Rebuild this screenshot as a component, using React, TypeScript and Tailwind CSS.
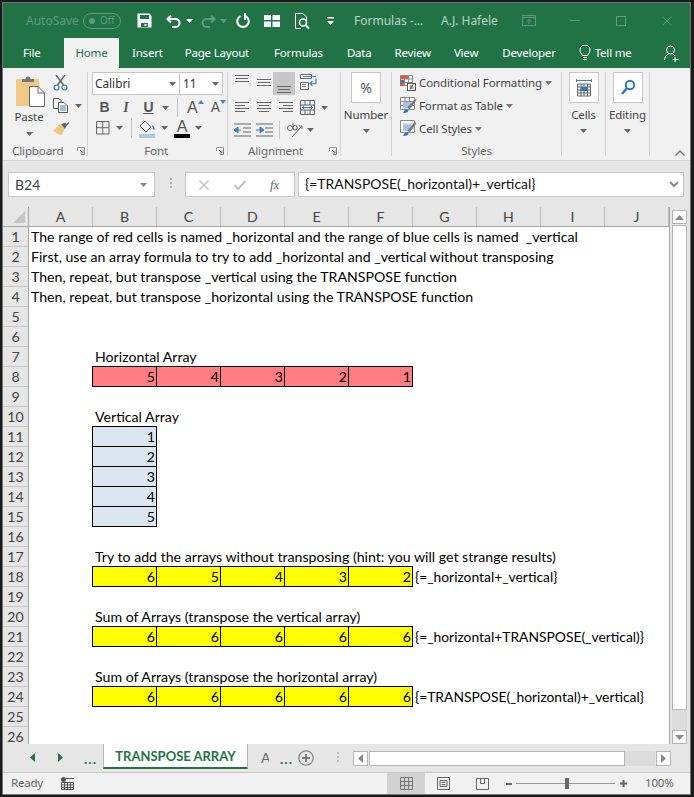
import React from "react";

const Caret = ({ c = "#666", cls = "" }: { c?: string; cls?: string }) => (
  <svg width="7" height="4" viewBox="0 0 7 4" className={"shrink-0 " + cls}><path d="M0 0h7L3.5 4z" fill={c} /></svg>
);

const Launcher = () => (
  <svg width="8" height="8" viewBox="0 0 8 8" className="shrink-0">
    <path d="M.5 4V.5H7.5" fill="none" stroke="#999" />
    <path d="M7.5.5V7.5H4M3 3l3 3M6 3.5V6H3.5" fill="none" stroke="#888" />
  </svg>
);

const Lines = ({ w, cls = "" }: { w: { x: number; l: number; y: number }[]; cls?: string }) => (
  <svg width="16" height="14" viewBox="0 0 16 14" className={"shrink-0 " + cls}>
    {w.map((r, i) => (
      <rect key={i} x={r.x} y={r.y} width={r.l} height="1" fill="#666" />
    ))}
  </svg>
);

const TitleIcons = () => (
  <>
    <svg width="15" height="15" viewBox="0 0 15 15" className="ml-[16px] shrink-0">
      <path fillRule="evenodd" fill="#fff" d="M.5.5H12.5L14.5 2.5V14.5H.5zM3 2v4h9V2zM4 10v4h7v-4zM7.5 11h2v2h-2z" />
    </svg>
    <svg width="15" height="14" viewBox="0 0 15 14" className="ml-[14px] shrink-0">
      <path d="M5 1.5L1.5 5 5 8.5M2 5h7.5a4 4 0 010 8H6" fill="none" stroke="#fff" strokeWidth="2" />
    </svg>
    <Caret c="#fff" cls="ml-[5px]" />
    <svg width="15" height="14" viewBox="0 0 15 14" className="ml-[8px] shrink-0">
      <path d="M10 1.5L13.5 5 10 8.5M13 5H5.5a4 4 0 000 8H9" fill="none" stroke="#5f9c7e" strokeWidth="2" />
    </svg>
    <Caret c="#5f9c7e" cls="ml-[4px]" />
    <svg width="14" height="15" viewBox="0 0 14 15" className="ml-[9px] shrink-0">
      <path d="M4.500 3.200A5.700 5.700 0 1 0 9.500 3.200" fill="none" stroke="#fff" strokeWidth="2" />
      <path d="M9.500.5v6h-1V.5z" fill="#fff" stroke="#fff" />
    </svg>
    <svg width="16" height="12" viewBox="0 0 16 12" className="ml-[14px] shrink-0">
      <path fill="#fff" d="M0 0h7v5H0zM8.500 0H16v5H8.500zM0 6.500h7V12H0zM8.500 6.500H16V12H8.500z" />
    </svg>
    <svg width="15" height="16" viewBox="0 0 15 16" className="ml-[15px] shrink-0">
      <path d="M.5.500H8L11.500 4V8M.5.500V15.500H6" fill="none" stroke="#fff" />
      <circle cx="8" cy="9.500" r="3.500" fill="none" stroke="#fff" strokeWidth="1.500" />
      <path d="M10.500 12l3.500 3.500" stroke="#fff" strokeWidth="2" />
    </svg>
    <svg width="7" height="8" viewBox="0 0 7 8" className="ml-[17px] shrink-0">
      <path d="M0 0h7v1.500H0zM0 4h7L3.500 8z" fill="#fff" />
    </svg>
  </>
);

const TitleBar = () => (
  <div className="flex h-[35px] shrink-0 items-center bg-[#217346] text-[12px] [font-family:'Noto_Sans',sans-serif]">
    <span className="ml-[23px] w-[51px] shrink-0 text-[#5f9c7e]">AutoSave</span>
    <div className="ml-[6px] flex h-[16px] w-[38px] shrink-0 items-center rounded-full border border-[#5f9c7e] pl-[5px] text-[10px] text-[#5f9c7e]">
      <i className="h-[6px] w-[6px] rounded-full bg-[#5f9c7e]" />
      <span className="ml-[5px]">Off</span>
    </div>
    <TitleIcons />
    <span className="ml-[20px] w-[70px] shrink-0 whitespace-nowrap text-[#bcd5c8]">Formulas -...</span>
    <span className="ml-[17px] w-[58px] shrink-0 whitespace-nowrap text-[#bcd5c8]">A.J. Hafele</span>
    <svg width="14" height="11" viewBox="0 0 14 11" className="ml-[23px] shrink-0">
      <path d="M.5.500h13v10H.5zM.5 2.500h13M7 9V4.500M5 6.500l2-2 2 2" fill="none" stroke="#5f9c7e" />
    </svg>
    <div className="ml-[34px] h-px w-[10px] shrink-0 bg-[#5f9c7e]" />
    <div className="ml-[36px] h-[10px] w-[10px] shrink-0 border border-[#5f9c7e]" />
    <svg width="10" height="10" viewBox="0 0 10 10" className="ml-[36px] shrink-0"><path d="M.5.500l9 9M9.500.500l-9 9" stroke="#5f9c7e" /></svg>
  </div>
);

const tabs: [string, number][] = [
  ["Insert", 13],
  ["Page Layout", 22],
  ["Formulas", 25],
  ["Data", 24],
  ["Review", 23],
  ["View", 23],
  ["Developer", 24],
];

const TabsRow = () => (
  <div className="flex h-[30px] shrink-0 items-center bg-[#217346] text-[11.500px] tracking-[-0.2px] text-white [font-family:'Noto_Sans',sans-serif]">
    <span className="ml-[20px] w-[18px] shrink-0">File</span>
    <div className="ml-[23px] flex h-[30px] w-[55px] shrink-0 items-center justify-center bg-[#f1f1f1] text-[#217346]">Home</div>
    {tabs.map(([t, m]) => (
      <span key={t} className="shrink-0 whitespace-nowrap" style={{ marginLeft: m }}>{t}</span>
    ))}
    <svg width="12" height="16" viewBox="0 0 12 16" className="ml-[23px] shrink-0">
      <path d="M3.500 10.500C2.500 8.500 1 7.500 1 5a5 5 0 0110 0c0 2.500-1.500 3.500-2.500 5.500zM4 12.500h4M4.500 14.500h3" fill="none" stroke="#fff" />
    </svg>
    <span className="ml-[4px] shrink-0 whitespace-nowrap">Tell me</span>
    <svg width="15" height="17" viewBox="0 0 15 17" className="ml-[32px] shrink-0">
      <circle cx="6.500" cy="5" r="4" fill="none" stroke="#fff" />
      <path d="M.5 15c0-3 2-5 4-6M8.500 9c1 .3 2 1 2.500 2M11 12v5M8.500 14.500h6" fill="none" stroke="#fff" />
    </svg>
  </div>
);

const Group = ({ w, children, label, labelCls = "justify-center" }: any) => (
  <div className="mt-1 flex h-[84px] shrink-0 flex-col border-r border-[#d0d0d0]" style={{ width: w }}>
    <div className="h-[74px]">{children}</div>
    <div className={"flex h-[10px] items-center text-[11.500px] leading-none tracking-[-0.1px] text-[#666] " + labelCls}>
      {label}
    </div>
  </div>
);

const BigBox = ({ children }: { children: React.ReactNode }) => (
  <div className="flex h-[31px] w-[30px] items-center justify-center border border-[#c6c6c6] bg-white">{children}</div>
);

const Clipboard = () => (
  <Group w={85} labelCls="justify-start" label={<><span className="ml-[9px] w-[52px]">Clipboard</span><span className="ml-[13px]"><Launcher /></span></>}>
    <div className="flex">
      <div className="ml-[9px] flex w-[34px] flex-col items-center">
        <svg width="29" height="31" viewBox="0 0 29 31" className="mt-[4px] ml-[2px]">
          <rect x="0" y="3" width="23" height="27" rx="1" fill="#f0c987" />
          <path d="M6 3h3.500a2.500 2.500 0 015 0H18v3H6z" fill="#777" />
          <path d="M13.500 10.500h8.500l6.500 6.500V30.500h-15z" fill="#fff" stroke="#666" />
          <path d="M22 10.500V17h6.500" fill="none" stroke="#666" />
        </svg>
        <span className="mt-[2px] text-[11.500px] leading-[16px] tracking-[-0.1px] text-[#444]">Paste</span>
        <Caret cls="mt-[7px]" />
      </div>
      <div className="ml-[7px] flex flex-col">
        <svg width="15" height="16" viewBox="0 0 15 16" className="mt-[3px]">
          <path d="M3 0l7.500 10M12 0L4.500 10" stroke="#666" strokeWidth="1.500" />
          <circle cx="3.500" cy="12.500" r="2.500" fill="none" stroke="#3f7fbf" strokeWidth="1.200" />
          <circle cx="11.500" cy="12.500" r="2.500" fill="none" stroke="#3f7fbf" strokeWidth="1.200" />
        </svg>
        <div className="mt-[7px] flex items-center">
          <svg width="16" height="15" viewBox="0 0 16 15">
            <path d="M.5.500H6L8 2.500V4M.5.500V10.500H5" fill="#fff" stroke="#555" />
            <path d="M5.500 4.500H11L14.500 8V14.500H5.500z" fill="#fff" stroke="#555" />
            <path d="M7 8h6M7 10h6M7 12h6" stroke="#3f7fbf" />
          </svg>
          <Caret cls="ml-[6px]" />
        </div>
        <svg width="17" height="15" viewBox="0 0 17 15" className="mt-[8px]">
          <path d="M0 10L7 3l5 5-4 6.500z" fill="#edc57f" />
          <path d="M8 3.500l4-2 1.500 1.500-1 1 3-3 1 1-3 3-1.500 3z" fill="#666" />
        </svg>
      </div>
    </div>
  </Group>
);

const Font = () => (
  <Group w={140} label={<><span className="mr-[48px]">Font</span><Launcher /></>} labelCls="justify-end pr-[3px]">
    <div className="ml-[4px] flex h-[23px] w-[131px] border border-[#c6c6c6] bg-white text-[11.800px] text-[#333]">
      <div className="flex w-[87px] items-center justify-between border-r border-[#c6c6c6] pl-[2px] pr-[3px]">
        <span>Calibri</span><Caret />
      </div>
      <div className="flex flex-1 items-center justify-between pl-[3px] pr-[3px]">
        <span>11</span><Caret />
      </div>
    </div>
    <div className="mt-[3px] flex h-[19px] items-center text-[#555]">
      <span className="ml-[10px] w-[13px] text-center text-[14px] font-bold [font-family:'Liberation_Sans',sans-serif]">B</span>
      <span className="ml-[10px] w-[10px] text-center font-bold text-[14px] italic [font-family:'Liberation_Serif',serif]">I</span>
      <span className="ml-[11px] w-[13px] text-center text-[14px] font-bold underline [font-family:'Liberation_Sans',sans-serif]">U</span>
      <Caret cls="ml-[7px]" />
      <div className="ml-[8px] h-[19px] w-px bg-[#c6c6c6]" />
      <span className="ml-[9px] text-[16px] [font-family:'Liberation_Sans',sans-serif]">A</span>
      <svg width="6" height="4" viewBox="0 0 6 4" className="-mt-[12px]"><path d="M0 4h6L3 0z" fill="#4a86c5" /></svg>
      <span className="ml-[7px] text-[14px] [font-family:'Liberation_Sans',sans-serif]">A</span>
      <svg width="6" height="4" viewBox="0 0 6 4" className="-mt-[12px]"><path d="M0 0h6L3 4z" fill="#4a86c5" /></svg>
    </div>
    <div className="mt-[1px] flex h-[20px] items-center">
      <svg width="14" height="14" viewBox="0 0 14 14" className="ml-[8px]">
        <path d="M.5.500h12.500v12.500H.5zM.5 6.700h12.500M6.700.5v12.500" fill="none" stroke="#666" />
      </svg>
      <Caret cls="ml-[6px]" />
      <div className="ml-[8px] h-[20px] w-px bg-[#c6c6c6]" />
      <svg width="17" height="19" viewBox="0 0 17 19" className="ml-[7px]">
        <path d="M6 2l6 6-5 5-6-6z" fill="#fff" stroke="#555" />
        <path d="M13 6c2 1 3 3 2.500 5-1.500 0-2-2-2.500-5z" fill="#3a78b8" />
        <rect x="0" y="15" width="16" height="4" fill="#aec6e8" />
      </svg>
      <Caret cls="ml-[5px]" />
      <div className="ml-[6px] flex w-[16px] flex-col items-center">
        <span className="h-[15px] text-[16px] leading-[15px] text-[#555] [font-family:'Liberation_Sans',sans-serif]">A</span>
        <div className="h-[4px] w-[16px] bg-black" />
      </div>
      <Caret cls="ml-[5px]" />
    </div>
  </Group>
);

const Alignment = () => {
  const l3 = (o: number) => [
    { x: 1, l: 14, y: o },
    { x: 2, l: 12, y: o + 3 },
    { x: 1, l: 14, y: o + 6 },
  ];
  return (
    <Group w={113} label={<><span className="mr-[26px]">Alignment</span><Launcher /></>} labelCls="justify-end pr-[3px]">
      <div className="flex h-[23px]">
        <Lines cls="ml-[6px] mt-[3px]" w={l3(0)} />
        <Lines cls="ml-[6px] mt-[3px]" w={l3(4)} />
        <div className="ml-[1px] flex h-[23px] w-[22px] items-end justify-center bg-[#c6c6c6]">
          <Lines cls="mb-[1px]" w={l3(6)} />
        </div>
        <svg width="17" height="16" viewBox="0 0 17 16" className="ml-[5px] mt-[2px]">
          <path d="M.5.500h11v4H.5zM.5 8.500h8v7h-8z" fill="#fff" stroke="#666" />
          <path d="M3 2.500h13M2 10.500h4M2 12.500h4" stroke="#3f7fbf" />
          <path d="M16 4.500v5h-5M12.500 7l-2.500 2.500 2.500 2.500" fill="none" stroke="#3f7fbf" strokeWidth="1.200" />
        </svg>
      </div>
      <div className="mt-[5px] flex h-[15px] items-center">
        <Lines cls="ml-[6px]" w={[{ x: 1, l: 14, y: 1 }, { x: 1, l: 10, y: 4 }, { x: 1, l: 14, y: 7 }, { x: 1, l: 10, y: 10 }]} />
        <Lines cls="ml-[6px]" w={[{ x: 1, l: 14, y: 1 }, { x: 3, l: 10, y: 4 }, { x: 1, l: 14, y: 7 }, { x: 3, l: 10, y: 10 }]} />
        <Lines cls="ml-[6px]" w={[{ x: 1, l: 14, y: 1 }, { x: 5, l: 10, y: 4 }, { x: 1, l: 14, y: 7 }, { x: 5, l: 10, y: 10 }]} />
        <svg width="15" height="15" viewBox="0 0 15 15" className="ml-[6px]">
          <path d="M.5.500h14v14H.5zM.5 5h14M.5 10h14M5 .5V5M10 .5V5M5 10v4.500M10 10v4.500" fill="none" stroke="#666" />
          <path d="M2.500 7.500h10M4.500 5.500l-2 2 2 2M10.500 5.500l2 2-2 2" fill="#fff" stroke="#3f7fbf" />
        </svg>
        <Caret cls="ml-[6px]" />
      </div>
      <div className="mt-[6px] flex h-[18px] items-center">
        <svg width="17" height="15" viewBox="0 0 17 15" className="ml-[6px]">
          <path d="M0 1h17M9 5h8M9 9h8M0 13h17" stroke="#666" />
          <path d="M7 7H3M0 7l4-3v6z" fill="#3f7fbf" stroke="#3f7fbf" />
        </svg>
        <svg width="17" height="15" viewBox="0 0 17 15" className="ml-[5px]">
          <path d="M0 1h17M9 5h8M9 9h8M0 13h17" stroke="#666" />
          <path d="M0 7h4M8 7L4 4v6z" fill="#3f7fbf" stroke="#3f7fbf" />
        </svg>
        <div className="ml-[6px] h-[18px] w-px bg-[#c6c6c6]" />
        <svg width="18" height="16" viewBox="0 0 18 16" className="ml-[7px] overflow-visible">
          <circle cx="3" cy="6" r="2.500" fill="none" stroke="#666" />
          <path d="M6 1v5a2 2 0 004 0 2 2 0 00-4-1" fill="none" stroke="#666" />
          <path d="M5 15l10-11M15 4h-3M15 4v3" fill="none" stroke="#666" />
        </svg>
        <Caret cls="ml-[2px]" />
      </div>
    </Group>
  );
};

const BigColumn = ({ w, label, icon, labelCls = "" }: any) => (
  <div className="mt-1 flex h-[84px] shrink-0 flex-col items-center border-r border-[#d0d0d0]" style={{ width: w }}>
    <BigBox>{icon}</BigBox>
    <span className={"mt-[3px] text-[11.500px] leading-[17px] tracking-[-0.1px] text-[#444] " + labelCls}>{label}</span>
    <Caret cls="mt-[6px]" />
  </div>
);

const StyleIconCF = () => (
  <svg width="16" height="16" viewBox="0 0 16 16">
    <path d="M.5.500h12v10H.5zM4.500.5v10M8.500.5v10M.5 4h12M.5 7.500h12" fill="#fff" stroke="#888" />
    <rect x="0" y="1" width="8" height="3" fill="#d85c38" />
    <rect x="0" y="5" width="4" height="3" fill="#3a78b8" />
    <rect x="0" y="8" width="4" height="3" fill="#d85c38" />
    <rect x="7.500" y="8.500" width="8" height="7" fill="#fff" stroke="#555" />
    <path d="M9.500 11h4M9.500 13h4M10 14.500l3-5" stroke="#333" strokeWidth=".8" />
  </svg>
);
const StyleIconT = ({ grid }: { grid?: boolean }) => (
  <svg width="17" height="17" viewBox="0 0 17 17">
    <path d="M.5.500h14v12H.5z" fill="#fff" stroke="#888" />
    {grid ? (
      <path d="M5 .5v12M9.500.5v12M.5 4.500h14M.5 8.500h14" stroke="#888" />
    ) : (
      <rect x="3" y="3" width="11" height="6" fill="#c6d6e8" />
    )}
    <rect x="3" y="5" width="8" height="6" fill="#a9c1dd" />
    <path d="M8 15c-2 1-4 1-5 1 1-1 1-3 3-4 2 0 3 1 2 3z" fill="#2f78bd" />
    <path d="M7 11l8-9 1.500 1-6.500 9z" fill="#777" />
  </svg>
);
const Styles = () => (
  <Group w={170} label={<span>Styles</span>}>
    <div className="flex flex-col gap-[6px] pl-[8px] pt-[2px] text-[11.500px] leading-[17px] tracking-[-0.1px] text-[#444]">
      {[
        { i: <StyleIconCF />, t: "Conditional Formatting" },
        { i: <StyleIconT grid />, t: "Format as Table" },
        { i: <StyleIconT />, t: "Cell Styles" },
      ].map((r) => (
        <div key={r.t} className="flex h-[17px] items-center">
          <span className="w-[19px] shrink-0">{r.i}</span>
          <span className="whitespace-nowrap">{r.t}</span>
          <Caret c="#777" cls="ml-[3px]" />
        </div>
      ))}
    </div>
  </Group>
);

const Ribbon = () => (
  <div className="flex h-[93px] shrink-0 border-b border-[#d4d4d4] bg-[#f1f1f1] [font-family:'Noto_Sans',sans-serif]">
    <Clipboard />
    <Font />
    <Alignment />
    <BigColumn w={51} label="Number" icon={<span className="text-[14px] text-[#555]">%</span>} />
    <Styles />
    <BigColumn w={44} label="Cells" icon={
      <svg width="16" height="20" viewBox="0 0 16 20">
        <path d="M.5 1v3M15.500 1v3M1 2.500h14" stroke="#3f7fbf" />
        <path d="M1.500 6h13v12h-13zM1.500 9h13M1.500 12h13M1.500 15h13M5 6v12M8 6v12M11.500 6v12" fill="#fff" stroke="#666" />
        <rect x="4.500" y="9" width="7" height="4" fill="#2f78bd" />
      </svg>
    } />
    <BigColumn w={44} label="Editing" icon={
      <svg width="16" height="17" viewBox="0 0 16 17">
        <circle cx="10" cy="6" r="4.200" fill="#fff" stroke="#2f78bd" strokeWidth="2" />
        <path d="M7 9l-5 6" stroke="#2f78bd" strokeWidth="2.500" />
      </svg>
    } />
    <div className="flex flex-1 items-end justify-end pb-[4px] pr-[5px]">
      <svg width="10" height="6" viewBox="0 0 10 6"><path d="M.5 5.500L5 1l4.500 4.500" fill="none" stroke="#777" strokeWidth="1.500" /></svg>
    </div>
  </div>
);

const FormulaBar = () => (
  <div className="flex h-[46px] shrink-0 items-start bg-[#e6e6e6] pt-[11px] text-[13px] text-[#333] [font-family:'Lato',sans-serif]">
    <div className="ml-[5px] flex h-[25px] w-[147px] shrink-0 items-center justify-between border border-[#c6c6c6] bg-white pl-[6px] pr-[7px] text-[14px] text-[#444]">
      <span>B24</span><Caret c="#888" />
    </div>
    <div className="ml-[15px] mt-[6px] flex w-[2px] shrink-0 flex-col gap-[2px]">
      <i className="h-[2px] w-[2px] bg-[#aaa]" /><i className="h-[2px] w-[2px] bg-[#aaa]" /><i className="h-[2px] w-[2px] bg-[#aaa]" />
    </div>
    <div className="ml-[13px] flex h-[25px] w-[110px] shrink-0 items-center border border-[#c6c6c6] bg-white">
      <svg width="10" height="10" viewBox="0 0 10 10" className="ml-[13px]"><path d="M.5.500l9 9M9.500.500l-9 9" stroke="#c2c2c2" strokeWidth="1.500" /></svg>
      <svg width="12" height="10" viewBox="0 0 12 10" className="ml-[25px]"><path d="M.5 5l3.500 4L11.500 1" fill="none" stroke="#c2c2c2" strokeWidth="2" /></svg>
      <span className="ml-[24px] text-[13px] italic text-[#666] [font-family:'Liberation_Serif',serif]">fx</span>
    </div>
    <div className="ml-[3px] flex h-[25px] w-[386px] shrink-0 items-center justify-between border border-[#c6c6c6] bg-white pl-[6px] pr-[4px]">
      <span className="text-[13.950px] text-[#111]">{"{=TRANSPOSE(_horizontal)+_vertical}"}</span>
      <svg width="10" height="7" viewBox="0 0 10 7"><path d="M1 1l4 4 4-4" fill="none" stroke="#888" strokeWidth="2" /></svg>
    </div>
  </div>
);

type CellT = { c: number; t: string };
const textRows: Record<number, CellT> = {
  1: { c: 0, t: "The range of red cells is named _horizontal and the range of blue cells is named  _vertical" },
  2: { c: 0, t: "First, use an array formula to try to add _horizontal and _vertical without transposing" },
  3: { c: 0, t: "Then, repeat, but transpose _vertical using the TRANSPOSE function" },
  4: { c: 0, t: "Then, repeat, but transpose _horizontal using the TRANSPOSE function" },
  7: { c: 1, t: "Horizontal Array" },
  10: { c: 1, t: "Vertical Array" },
  17: { c: 1, t: "Try to add the arrays without transposing (hint: you will get strange results)" },
  20: { c: 1, t: "Sum of Arrays (transpose the vertical array)" },
  23: { c: 1, t: "Sum of Arrays (transpose the horizontal array)" },
};
const dataRows: Record<number, { v: number[]; bg: string; note?: string }> = {
  8: { v: [5, 4, 3, 2, 1], bg: "bg-[#ff7c80]" },
  11: { v: [1], bg: "bg-[#dce6f1]" },
  12: { v: [2], bg: "bg-[#dce6f1]" },
  13: { v: [3], bg: "bg-[#dce6f1]" },
  14: { v: [4], bg: "bg-[#dce6f1]" },
  15: { v: [5], bg: "bg-[#dce6f1]" },
  18: { v: [6, 5, 4, 3, 2], bg: "bg-[#ffff00]", note: "{=_horizontal+_vertical}" },
  21: { v: [6, 6, 6, 6, 6], bg: "bg-[#ffff00]", note: "{=_horizontal+TRANSPOSE(_vertical)}" },
  24: { v: [6, 6, 6, 6, 6], bg: "bg-[#ffff00]", note: "{=TRANSPOSE(_horizontal)+_vertical}" },
};

const Row = ({ n }: { n: number }) => {
  const tr = textRows[n];
  const dr = dataRows[n];
  return (
    <div className="flex h-5 shrink-0 items-start">
      <div className="flex h-5 w-[26px] shrink-0 items-center justify-center border-r border-b border-r-[#a6a6a6] border-b-[#c6c6c6] bg-[#e6e6e6] text-[#444]">
        {n}
      </div>
      {tr && (
        <div className={"h-5 whitespace-pre pl-[2px] leading-[20px] text-black " + (tr.c === 1 ? "ml-16" : "")}>{tr.t}</div>
      )}
      {dr && (
        <>
          <div className="w-16 shrink-0" />
          {dr.v.map((v, i) => (
            <div key={i} className={"relative -mt-px -ml-px flex h-[21px] w-[65px] shrink-0 items-center justify-end border border-black pr-[1px] text-black " + dr.bg}>
              {v}
            </div>
          ))}
          {dr.note && <div className="h-5 whitespace-nowrap pl-[2px] text-[13.850px] leading-[20px] text-black">{dr.note}</div>}
        </>
      )}
    </div>
  );
};

const ScrollBtn = ({ d }: { d: string }) => (
  <div className="flex h-[14px] w-[15px] shrink-0 items-center justify-center border border-[#b5b5b5] bg-white">
    <svg width="9" height="5" viewBox="0 0 9 5"><path d={d} fill="#888" /></svg>
  </div>
);

const Sheet = () => (
  <div className="flex h-[537px] shrink-0 bg-[#e6e6e6] text-[14.150px] [font-family:'Lato',sans-serif]">
    <div className="flex h-[537px] w-[667px] shrink-0 flex-col overflow-hidden border-r border-[#a6a6a6] bg-white">
      <div className="flex h-5 shrink-0 border-b border-[#a6a6a6] bg-[#e6e6e6]">
        <div className="flex h-[19px] w-[26px] shrink-0 items-end justify-end border-r border-[#a6a6a6] pb-[3px] pr-[3px]">
          <svg width="12" height="12" viewBox="0 0 12 12"><path d="M12 0v12H0z" fill="#c6c6c6" /></svg>
        </div>
        {"ABCDEFGHIJ".split("").map((c) => (
          <div key={c} className="flex h-[19px] w-16 shrink-0 items-center justify-center border-r border-[#bdbdbd] text-[#444]">{c}</div>
        ))}
      </div>
      {Array.from({ length: 26 }, (_, i) => <Row key={i} n={i + 1} />)}
    </div>
    <div className="ml-[2px] mt-[3px] flex h-[534px] w-[15px] shrink-0 flex-col">
      <ScrollBtn d="M0 5h9L4.500 0z" />
      <div className="mt-px h-[485px] shrink-0 border border-[#b5b5b5] bg-white" />
      <div className="h-[20px] shrink-0 bg-[#dcdcdc]" />
      <ScrollBtn d="M0 0h9L4.500 5z" />
    </div>
  </div>
);

const HArrow = ({ d }: { d: string }) => (
  <div className="flex h-[15px] w-[15px] shrink-0 items-center justify-center border border-[#b5b5b5] bg-white">
    <svg width="5" height="9" viewBox="0 0 5 9"><path d={d} fill="#888" /></svg>
  </div>
);

const TabBar = () => (
  <div className="flex h-[28px] shrink-0 items-start bg-[#e6e6e6] [font-family:'Lato',sans-serif]">
    <svg width="5" height="9" viewBox="0 0 5 9" className="ml-[27px] mt-[9px] shrink-0"><path d="M5 0v9L0 4.500z" fill="#217346" /></svg>
    <svg width="5" height="9" viewBox="0 0 5 9" className="ml-[23px] mt-[9px] shrink-0"><path d="M0 0v9l5-4.500z" fill="#217346" /></svg>
    <span className="ml-[21px] mt-[7px] w-[10px] shrink-0 text-[14px] font-bold leading-[16px] tracking-[1px] text-[#217346]">...</span>
    <div className="ml-[9px] flex h-[25px] w-[145px] shrink-0 items-center justify-center border-x border-b-2 border-x-[#b5b5b5] border-b-[#217346] bg-white pt-[2px] text-[13px] font-bold text-[#217346]">
      TRANSPOSE ARRAY
    </div>
    <span className="ml-[13px] mt-[6px] w-[8px] shrink-0 overflow-hidden text-[14px] leading-[16px] text-[#666]">A</span>
    <span className="ml-[11px] mt-[7px] w-[10px] shrink-0 text-[14px] font-bold leading-[16px] tracking-[1px] text-[#217346]">...</span>
    <svg width="16" height="16" viewBox="0 0 16 16" className="ml-[8px] mt-[6px] shrink-0">
      <circle cx="8" cy="8" r="7.200" fill="none" stroke="#888" strokeWidth="1.300" />
      <path d="M8 4v8M4 8h8" stroke="#777" strokeWidth="1.800" />
    </svg>
    <div className="ml-[23px] mt-[8px] flex shrink-0 flex-col gap-[2px]">
      <i className="h-[2px] w-[2px] bg-[#bbb]" /><i className="h-[2px] w-[2px] bg-[#bbb]" /><i className="h-[2px] w-[2px] bg-[#bbb]" />
    </div>
    <div className="ml-[14px] mt-[7px] flex w-[318px] shrink-0">
      <HArrow d="M5 0v9L0 4.500z" />
      <div className="ml-px h-[15px] w-[256px] shrink-0 border border-[#b5b5b5] bg-white" />
      <div className="h-[15px] w-[30px] shrink-0 bg-[#dcdcdc]" />
      <div className="ml-px"><HArrow d="M0 0v9l5-4.500z" /></div>
    </div>
  </div>
);

const StatusBar = () => (
  <div className="flex h-[22px] shrink-0 items-center border-t border-[#c6c6c6] bg-[#f1f1f1] text-[11.500px] tracking-[-0.2px] text-[#666] [font-family:'Noto_Sans',sans-serif]">
    <span className="ml-[8px] w-[31px] shrink-0 pb-[2px]">Ready</span>
    <svg width="13" height="13" viewBox="0 0 13 13" className="ml-[19px] shrink-0">
      <circle cx="2.500" cy="2.500" r="2.500" fill="#555" />
      <path d="M5 1.500h8M.5 5.500h12v7H.5zM.5 8h12M.5 10.500h12M3.500 5.500v7M6.500 5.500v7M9.500 5.500v7" fill="none" stroke="#555" />
    </svg>
    <div className="ml-[313px] flex h-[21px] w-[38px] shrink-0 items-center justify-center bg-[#d2d2d2]">
      <svg width="13" height="13" viewBox="0 0 13 13"><path d="M.5.500h12v12H.5zM.5 4.500h12M.5 8.500h12M4.500.5v12M8.500.5v12" fill="none" stroke="#777" /></svg>
    </div>
    <svg width="13" height="13" viewBox="0 0 13 13" className="ml-[12px] shrink-0"><path d="M.5.500h12v12H.5zM3 3.500h7v6H3zM4.500 5.500h4M4.500 7.500h4" fill="none" stroke="#666" /></svg>
    <svg width="13" height="13" viewBox="0 0 13 13" className="ml-[26px] shrink-0"><path d="M.5 1.500h12v11H.5zM4.500 1.500v5h4v-5" fill="none" stroke="#666" /></svg>
    <div className="ml-[17px] h-[2px] w-[6px] shrink-0 bg-[#666]" />
    <div className="relative ml-[4px] h-px w-[99px] shrink-0 bg-[#999]">
      <div className="absolute left-[49px] top-[-5px] h-[11px] w-[4px] bg-[#666]" />
    </div>
    <svg width="7" height="7" viewBox="0 0 7 7" className="ml-[5px] shrink-0"><path d="M3.500 0v7M0 3.500h7" stroke="#666" strokeWidth="2" /></svg>
    <span className="ml-[18px] whitespace-nowrap pb-[2px]">100%</span>
  </div>
);

export default function App() {
  return (
    <div className="h-[797px] w-[694px] overflow-hidden border-t-2 border-r-[3px] border-b-2 border-l-2 border-[#1a1a1a]">
      <div className="flex h-[793px] w-[689px] flex-col overflow-hidden border border-[#777]">
        <TitleBar />
        <TabsRow />
        <Ribbon />
        <FormulaBar />
        <Sheet />
        <TabBar />
        <StatusBar />
      </div>
    </div>
  );
}
